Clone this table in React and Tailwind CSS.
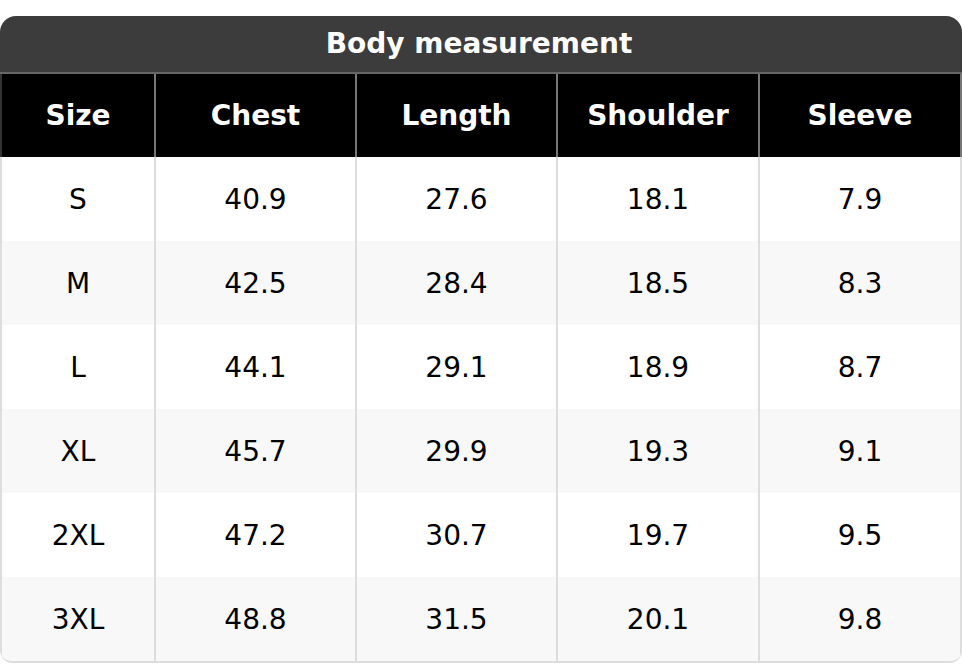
import React from 'react';

const cols = ['Size', 'Chest', 'Length', 'Shoulder', 'Sleeve'];
const rows = [
  ['S', '40.9', '27.6', '18.1', '7.9'],
  ['M', '42.5', '28.4', '18.5', '8.3'],
  ['L', '44.1', '29.1', '18.9', '8.7'],
  ['XL', '45.7', '29.9', '19.3', '9.1'],
  ['2XL', '47.2', '30.7', '19.7', '9.5'],
  ['3XL', '48.8', '31.5', '20.1', '9.8'],
];

const grid = 'grid grid-cols-[154px_201px_201px_202px_1fr]';

export default function App() {
  return (
    <div className="w-[962px] h-[664px] bg-white pt-4 font-['DejaVu_Sans',sans-serif]">
      <div className="rounded-t-2xl rounded-b-xl overflow-hidden">
        <div className="h-[58px] pr-[4px] bg-[#3c3c3c] flex items-center justify-center text-white font-bold text-[28px] border-b-2 border-[#666]">
          Body measurement
        </div>
        <div className={`${grid} bg-black h-[83px]`}>
          {cols.map((c, i) => (
            <div
              key={c}
              className={`flex items-center justify-center pt-[1px] text-white font-bold text-[28px] ${i > 0 ? 'border-l-2 border-[#777]' : 'border-l-2 border-[#333]'} ${i === 4 ? 'border-r-2 border-r-[#777]' : ''}`}
            >
              {c}
            </div>
          ))}
        </div>
        <div className="border-b-2 border-[#ddd] rounded-b-xl overflow-hidden">
          {rows.map((r, ri) => (
            <div key={r[0]} className={`${grid} h-[84px] ${ri % 2 ? 'bg-[#f8f8f8]' : 'bg-white'}`}>
              {r.map((v, i) => (
                <div
                  key={i}
                  className={`flex items-center justify-center pt-[2px] text-black text-[28px] border-l-2 border-[#ddd] ${i === 4 ? 'border-r-2 border-r-[#ddd]' : ''}`}
                >
                  {v}
                </div>
              ))}
            </div>
          ))}
        </div>
      </div>
    </div>
  );
}
